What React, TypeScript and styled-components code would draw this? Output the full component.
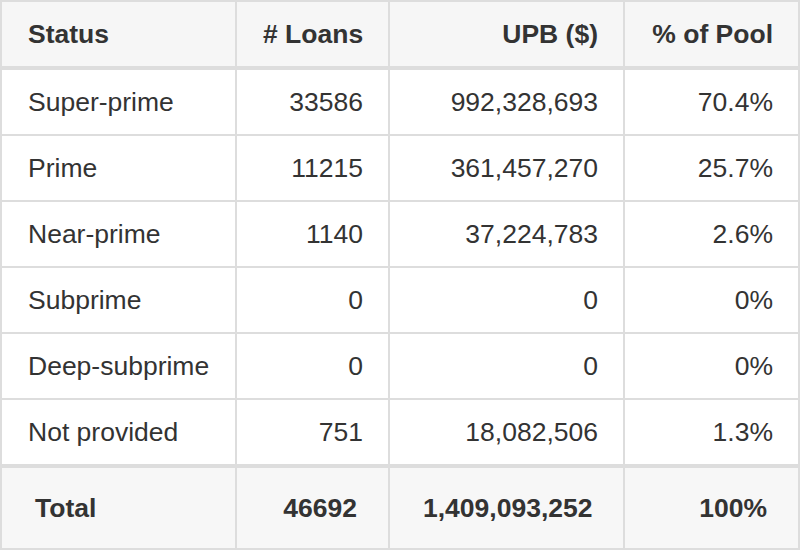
import React from "react";
import styled, { createGlobalStyle } from "styled-components";

const Global = createGlobalStyle`
  html, body { margin: 0; padding: 0; background: #fff; }
  body { font-family: "Liberation Sans", Arial, Helvetica, sans-serif; color: #333; }
`;

const Table = styled.table`
  width: 800px;
  table-layout: fixed;
  border-collapse: separate;
  border-spacing: 0;
  border-top: 2px solid #ddd;
  border-left: 2px solid #ddd;
  font-size: 26.5px;
  color: #333;
`;

const HeadCell = styled.th<{ $align?: "left" | "right" }>`
  box-sizing: border-box;
  height: 68px;
  padding: 0 25px 0 26px;
  background: #f6f6f6;
  font-weight: bold;
  text-align: ${(p) => p.$align ?? "right"};
  border-right: 2px solid #ddd;
  border-bottom: 4px solid #ddd;
  vertical-align: middle;
  white-space: nowrap;
`;

const Cell = styled.td<{ $align?: "left" | "right"; $last?: boolean }>`
  box-sizing: border-box;
  height: ${(p) => (p.$last ? 68 : 66)}px;
  padding: 0 25px 0 26px;
  text-align: ${(p) => p.$align ?? "right"};
  border-right: 2px solid #ddd;
  border-bottom: ${(p) => (p.$last ? 4 : 2)}px solid #ddd;
  vertical-align: middle;
  white-space: nowrap;
`;

const TotalCell = styled.td<{ $align?: "left" | "right" }>`
  box-sizing: border-box;
  height: 82px;
  padding: 0 31px 0 33px;
  background: #f7f7f7;
  font-weight: bold;
  text-align: ${(p) => p.$align ?? "right"};
  border-right: 2px solid #ddd;
  border-bottom: 2px solid #ddd;
  vertical-align: middle;
  white-space: nowrap;
`;

const rows = [
  ["Super-prime", "33586", "992,328,693", "70.4%"],
  ["Prime", "11215", "361,457,270", "25.7%"],
  ["Near-prime", "1140", "37,224,783", "2.6%"],
  ["Subprime", "0", "0", "0%"],
  ["Deep-subprime", "0", "0", "0%"],
  ["Not provided", "751", "18,082,506", "1.3%"],
];

export default function App() {
  return (
    <>
      <Global />
      <Table>
        <colgroup>
          <col style={{ width: 235 }} />
          <col style={{ width: 153 }} />
          <col style={{ width: 235 }} />
          <col style={{ width: 175 }} />
        </colgroup>
        <thead>
          <tr>
            <HeadCell $align="left">Status</HeadCell>
            <HeadCell># Loans</HeadCell>
            <HeadCell>UPB ($)</HeadCell>
            <HeadCell>% of Pool</HeadCell>
          </tr>
        </thead>
        <tbody>
          {rows.map((r, i) => {
            const last = i === rows.length - 1;
            return (
              <tr key={r[0]}>
                <Cell $align="left" $last={last}>{r[0]}</Cell>
                <Cell $last={last}>{r[1]}</Cell>
                <Cell $last={last}>{r[2]}</Cell>
                <Cell $last={last}>{r[3]}</Cell>
              </tr>
            );
          })}
        </tbody>
        <tfoot>
          <tr>
            <TotalCell $align="left">Total</TotalCell>
            <TotalCell>46692</TotalCell>
            <TotalCell>1,409,093,252</TotalCell>
            <TotalCell>100%</TotalCell>
          </tr>
        </tfoot>
      </Table>
    </>
  );
}
